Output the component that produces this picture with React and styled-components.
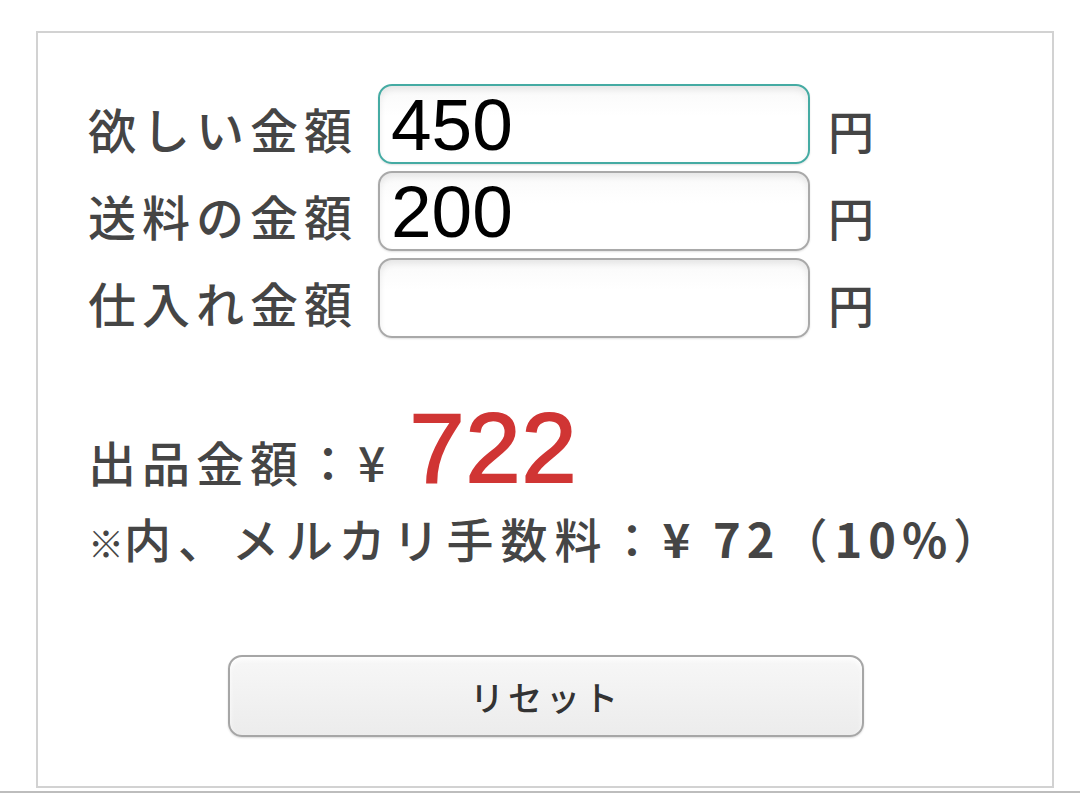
import React, { useState } from "react";
import styled, { createGlobalStyle } from "styled-components";

const GlobalStyle = createGlobalStyle`
  html, body {
    margin: 0;
    padding: 0;
    background: #ffffff;
  }
  body {
    font-family: "Noto Sans CJK JP", "Liberation Sans", sans-serif;
    color: #444;
  }
`;

const FEE_RATE = 0.1;

function App() {
  const [wanted, setWanted] = useState("450");
  const [shipping, setShipping] = useState("200");
  const [cost, setCost] = useState("");

  const base = (Number(wanted) || 0) + (Number(shipping) || 0);
  const price = Math.floor(base / (1 - FEE_RATE));
  const fee = Math.floor(price * FEE_RATE);

  const reset = () => {
    setWanted("");
    setShipping("");
    setCost("");
  };

  const fields = [
    { label: "欲しい金額", value: wanted, set: setWanted, focused: true },
    { label: "送料の金額", value: shipping, set: setShipping },
    { label: "仕入れ金額", value: cost, set: setCost },
  ];

  return (
    <>
      <GlobalStyle />
      <Page>
        <Panel>
          <Form>
            {fields.map((f) => (
              <Row key={f.label}>
                <Label>{f.label}</Label>
                <Input
                  type="text"
                  inputMode="numeric"
                  value={f.value}
                  $focused={f.focused}
                  onChange={(e) => f.set(e.target.value)}
                />
                <Unit>円</Unit>
              </Row>
            ))}
          </Form>

          <Result>
            <PriceLine>
              <span>出品金額：¥</span>
              <Price>{price}</Price>
            </PriceLine>
            <FeeLine>
              <Mark>※</Mark>内、メルカリ手数料：<Num>¥ {fee}</Num>（<Num>10%</Num>）
            </FeeLine>
          </Result>

          <ButtonWrap>
            <ResetButton onClick={reset}>リセット</ResetButton>
          </ButtonWrap>
        </Panel>
        <BottomRule />
      </Page>
    </>
  );
}

const Page = styled.div`
  padding: 31px 26px 0 36px;
  height: 795px;
  box-sizing: border-box;
  display: flex;
  flex-direction: column;
`;

const Panel = styled.div`
  width: 1018px;
  height: 757px;
  box-sizing: border-box;
  border: 2px solid #d2d2d2;
  padding: 51px 0 0 50px;
  display: flex;
  flex-direction: column;
`;

const BottomRule = styled.div`
  margin: 3px 0 0 -36px;
  width: 1080px;
  height: 2px;
  background: #bdbdbd;
`;

const Form = styled.div`
  display: flex;
  flex-direction: column;
  gap: 7px;
`;

const Row = styled.div`
  display: flex;
  align-items: center;
`;

const Label = styled.span`
  width: 290px;
  font-size: 48px;
  font-weight: 500;
  letter-spacing: 6px;
  line-height: 1;
  color: #454545;
  white-space: nowrap;
  padding-top: 8px;
`;

const Input = styled.input`
  width: 432px;
  height: 80px;
  box-sizing: border-box;
  border-radius: 14px;
  border: 2px solid ${(p) => (p.$focused ? "#45aba3" : "#a9a9a9")};
  box-shadow: inset 0 4px 6px rgba(0, 0, 0, 0.08),
    0 1px 2px rgba(0, 0, 0, 0.12);
  background: linear-gradient(#f9f9f9, #ffffff 40%);
  font-family: "Liberation Sans", Arial, sans-serif;
  font-size: 73px;
  color: #000;
  padding: 0 11px;
  line-height: 1;
  outline: none;
`;

const Unit = styled.span`
  margin-left: 18px;
  font-size: 46px;
  font-weight: 500;
  line-height: 1;
  color: #454545;
  padding-top: 10px;
`;

const Result = styled.div`
  margin-top: 70px;
  display: flex;
  flex-direction: column;
`;

const PriceLine = styled.div`
  display: flex;
  align-items: baseline;
  font-size: 48px;
  font-weight: 500;
  letter-spacing: 6px;
  color: #454545;
  line-height: 1;
`;

const Price = styled.span`
  margin-left: 18px;
  font-family: "Liberation Sans", Arial, sans-serif;
  font-size: 99px;
  font-weight: 400;
  -webkit-text-stroke: 2px #d03534;
  letter-spacing: 1px;
  color: #d03534;
  line-height: 0.8;
`;

const FeeLine = styled.div`
  margin-top: 27px;
  font-size: 47px;
  font-weight: 500;
  letter-spacing: 7px;
  line-height: 1;
  color: #454545;
  white-space: nowrap;
`;

const Mark = styled.span`
  font-size: 36px;
  font-weight: 700;
  letter-spacing: 0;
`;

const Num = styled.span`
  font-weight: 700;
  letter-spacing: 6px;
`;

const ButtonWrap = styled.div`
  margin-top: 94px;
  padding-left: 140px;
`;

const ResetButton = styled.button`
  width: 636px;
  height: 82px;
  border-radius: 14px;
  border: 2px solid #a6a6a6;
  background: linear-gradient(#f7f7f7, #ececec);
  box-shadow: inset 0 3px 5px rgba(255, 255, 255, 0.9),
    0 1px 2px rgba(0, 0, 0, 0.15);
  font-family: "Noto Sans CJK JP", sans-serif;
  font-size: 34px;
  font-weight: 500;
  letter-spacing: 4px;
  color: #333;
  cursor: pointer;
`;

export default App;
